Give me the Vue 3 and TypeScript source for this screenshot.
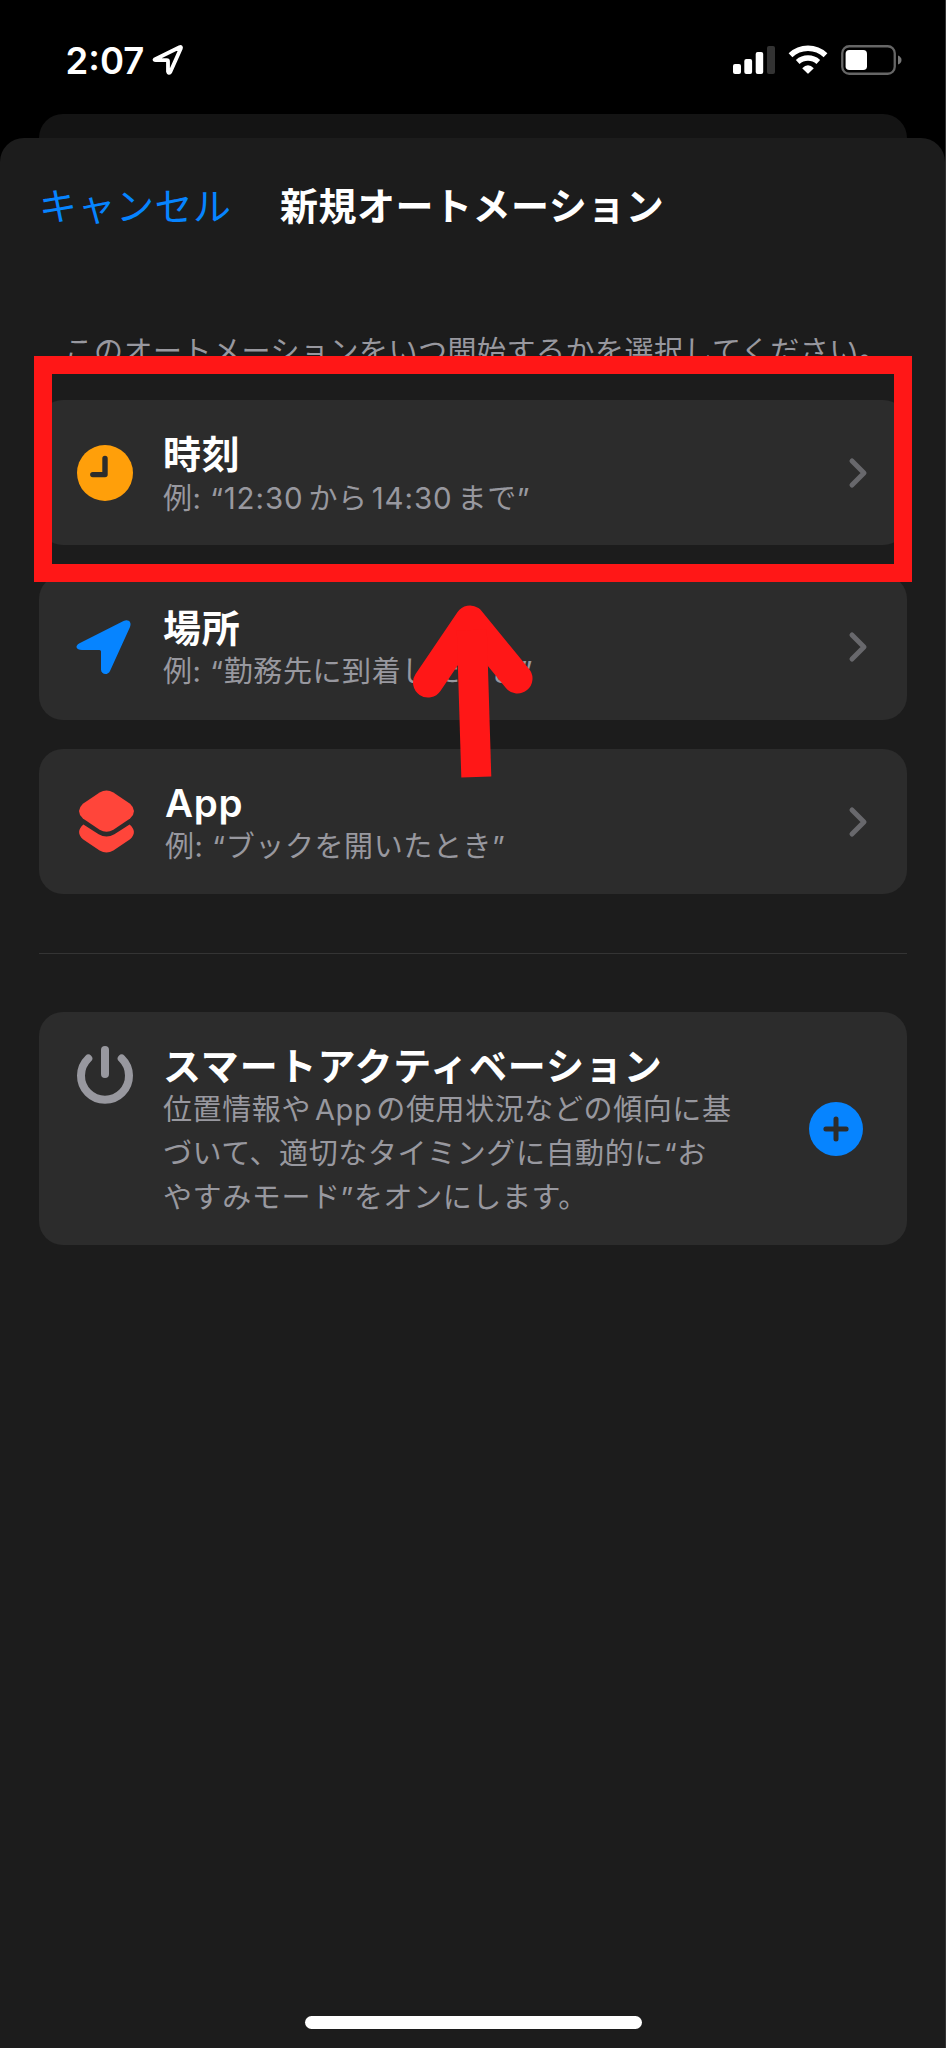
<script setup lang="ts">
interface Run {
  text: string
  kind?: 'latin' | 'digits'
}

interface Trigger {
  id: 'time' | 'place' | 'app'
  title: string
  example: Run[]
}

const triggers: Trigger[] = [
  {
    id: 'time',
    title: '時刻',
    example: [
      { text: '例: “' },
      { text: '12:30', kind: 'digits' },
      { text: 'から' },
      { text: '14:30', kind: 'digits' },
      { text: 'まで”' },
    ],
  },
  { id: 'place', title: '場所', example: [{ text: '例: “勤務先に到着したとき”' }] },
  { id: 'app', title: 'App', example: [{ text: '例: “ブックを開いたとき”' }] },
]

const smartLines: Run[][] = [
  [{ text: '位置情報や' }, { text: 'App', kind: 'latin' }, { text: 'の使用状況などの傾向に基' }],
  [{ text: 'づいて、適切なタイミングに自動的に“お' }],
  [{ text: 'やすみモード”をオンにします。' }],
]
</script>

<template>
  <div class="screen">
    <header class="status">
      <div class="clock">
        <span class="now">2:07</span>
        <svg class="loc" viewBox="0 0 32 32">
          <path d="M3.2 15.2 27.5 3.2Q29.6 2.4 28.8 4.5L18.3 28Q16.6 30 16 27.600V17.500Q16 16.200 14.800 16.200H4Q1.500 16 3.200 15.200Z" />
        </svg>
      </div>
      <div class="indicators">
        <svg class="signal" viewBox="0 0 42 28">
          <rect x="0" y="18" width="8" height="10" rx="2" />
          <rect x="11.300" y="13" width="7.800" height="15" rx="2" />
          <rect x="22.700" y="6" width="7.500" height="22" rx="2" />
          <rect class="dim" x="34" y="0" width="8" height="28" rx="2" />
        </svg>
        <svg class="wifi" viewBox="0 0 40 30">
          <path d="M2.500 11.300A25.500 25.500 0 0 1 37.500 11.300" />
          <path d="M9.700 18A15.500 15.500 0 0 1 30.300 18" />
          <path class="dot" d="M14.200 24.200Q20 18.500 25.800 24.200L20.700 29.300Q20 30 19.300 29.300Z" />
        </svg>
        <svg class="battery" viewBox="0 0 61 30">
          <rect class="case" x="1.250" y="1.250" width="52.500" height="27.500" rx="7" />
          <rect x="4.600" y="5" width="21.400" height="20" rx="3.800" />
          <path class="nub" d="M57 10.500Q60.500 12 60.500 15T57 19.500Z" />
        </svg>
      </div>
    </header>

    <div class="back-sheet"></div>

    <main class="sheet">
      <nav class="bar">
        <span class="cancel">キャンセル</span>
        <h1 class="heading">新規オートメーション</h1>
      </nav>

      <p class="prompt">このオートメーションをいつ開始するかを選択してください。</p>

      <section class="list">
        <article v-for="t in triggers" :key="t.id" class="card" :class="`card-${t.id}`">
          <svg v-if="t.id === 'time'" class="icon" viewBox="0 0 60 60">
            <circle cx="30" cy="30" r="28" fill="#ff9f0a" />
            <path d="M30 15.500V31.600H17.800" fill="none" stroke="#2c2c2c" stroke-width="5.400" stroke-linecap="round" stroke-linejoin="round" />
          </svg>
          <svg v-else-if="t.id === 'place'" class="icon" viewBox="0 0 60 60">
            <path d="M4.500 26.200 48.500 3.900C53.500 1.800 57 5 55 10L35 54C32.500 59 26 57.500 26 52.500V34.500Q26 33 24.500 33H7C1 33-.5 28.800 4.500 26.200Z" fill="#0684ff" />
          </svg>
          <svg v-else class="icon" viewBox="0 0 58 64">
            <path d="M22 2.500Q29-1.500 36 2.500L53 14Q61 21.500 53 29L36 40.500Q29 44.500 22 40.500L5 29Q-3 21.500 5 14Z" fill="#ff453a" />
            <path d="M5.500 35 21 45Q29 49.500 37 45L52.500 35Q61 42.500 53 50L36 61.500Q29 65.500 22 61.500L5 50Q-3 42.500 5.500 35Z" fill="#ff453a" />
          </svg>
          <div class="text">
            <h2 class="title">{{ t.title }}</h2>
            <p class="sub"><span v-for="(run, i) in t.example" :key="i" :class="run.kind">{{ run.text }}</span></p>
          </div>
          <svg class="chevron" viewBox="0 0 18 30">
            <path d="M3 3 15 15 3 27" />
          </svg>
        </article>
      </section>

      <hr class="rule" />

      <article class="card smart">
        <svg class="icon" viewBox="0 0 60 60">
          <path d="M30 6V30" />
          <path d="M13.300 14.500A24 24 0 1 0 46.700 14.500" />
        </svg>
        <div class="text">
          <h2 class="title">スマートアクティベーション</h2>
          <p v-for="(line, n) in smartLines" :key="n" class="sub"><span v-for="(run, i) in line" :key="i" :class="run.kind">{{ run.text }}</span></p>
        </div>
        <svg class="add" viewBox="0 0 54 54">
          <circle cx="27" cy="27" r="27" />
          <path d="M27 16.900V37.100M16.900 27H37.100" />
        </svg>
      </article>
    </main>

    <div class="highlight"></div>
    <svg class="pointer" viewBox="0 0 100 180">
      <path class="head" d="M16 82.500 58 20.500 105.500 78.500" />
      <path d="M59.800 30 64.300 177" />
    </svg>
    <div class="home"></div>
  </div>
</template>

<style>
html,
body {
  margin: 0;
  background: #1c1c1c;
}
</style>

<style scoped>
.screen {
  position: relative;
  width: 946px;
  height: 2048px;
  box-sizing: border-box;
  border-right: 1px solid #333;
  overflow: hidden;
  background: #000;
  color: #fff;
  font-family: Inter, 'Noto Sans CJK JP', sans-serif;
}
h1, h2, p { margin: 0; white-space: nowrap; }
svg { display: block; flex: none; overflow: visible; }

.status {
  display: flex;
  justify-content: space-between;
  height: 114px;
  box-sizing: border-box;
  padding: 44px 43.500px 0 65.500px;
}
.clock { display: flex; }
.now { font-size: 36.500px; font-weight: 560; line-height: 34px; width: 86px; letter-spacing: 0; }
.loc { width: 32px; height: 32px; fill: none; stroke: #fff; stroke-width: 3.800; stroke-linejoin: round; }
.indicators { display: flex; }
.signal { width: 42px; height: 28px; margin: 2px 13px 0 0; fill: #fff; }
.signal .dim { fill: #333; }
.wifi { width: 40px; height: 30px; margin-right: 13px; fill: none; stroke: #fff; stroke-width: 5.500; }
.wifi .dot { fill: #fff; stroke: none; }
.battery { width: 61px; height: 30px; margin-top: 1px; fill: #fff; }
.battery .case { fill: none; stroke: #666; stroke-width: 2.300; }
.battery .nub { fill: #777; }

.back-sheet { height: 24px; margin: 0 38px 0 39px; background: #141414; border-radius: 24px 24px 0 0; }

.sheet {
  height: 1910px;
  box-sizing: border-box;
  padding: 0 38px 0 39px;
  background: #1c1c1c;
  border-radius: 24px 24px 0 0;
}
.bar { display: flex; align-items: center; height: 138px; padding-bottom: 8px; box-sizing: border-box; }
.cancel { width: 241px; color: #0684ff; font-size: 38px; font-weight: 400; letter-spacing: 0.500px; }
.heading { font-size: 38px; font-weight: 600; letter-spacing: 0.500px; }
.prompt {
  height: 124px;
  padding: 56px 0 0 25.500px;
  box-sizing: border-box;
  color: #98989f;
  font-size: 29px;
  font-weight: 400;
  line-height: 40px;
  letter-spacing: 0.500px;
}
.list { display: flex; flex-direction: column; gap: 29.500px; }
.card {
  display: flex;
  align-items: center;
  height: 145px;
  box-sizing: border-box;
  padding: 0 40px 0 36px;
  background: #2c2c2c;
  border-radius: 24px;
}
.icon { width: 60px; height: 60px; margin-right: 28px; }
.card-app .icon { width: 57px; height: 63px; margin: 0 30px 0 3px; }
.text { flex: 1; padding-top: 6px; }
.title { height: 44px; line-height: 44px; font-size: 38px; font-weight: 600; letter-spacing: 0.700px; }
.card-app .title { font-size: 38.500px; }
.smart .title { letter-spacing: 0.900px; }
.sub { height: 44px; line-height: 44px; color: #98989f; font-size: 29px; font-weight: 400; letter-spacing: 0.600px; }
.sub .latin { margin: 0 4px; }
.sub .digits { margin: 0 5px 0 4px; font-size: 29.500px; letter-spacing: 0.900px; }
.sub .digits:nth-child(2) { margin-left: 0; }
.chevron { width: 18px; height: 30px; fill: none; stroke: #68686c; stroke-width: 5; stroke-linecap: round; stroke-linejoin: round; }
.rule { height: 1px; margin: 59px 0 58px; border: 0; background: #343434; }
.smart { height: 233px; padding-right: 44px; }
.smart .icon { align-self: flex-start; margin-top: 32px; fill: none; stroke: #98989f; stroke-width: 8; stroke-linecap: round; }
.add { width: 54px; height: 54px; fill: #0684ff; }
.add path { stroke: #2c2c2c; stroke-width: 5; stroke-linecap: round; }

.highlight {
  position: absolute;
  left: 34px;
  top: 356px;
  width: 878px;
  height: 226px;
  box-sizing: border-box;
  border: 18px solid #ff1717;
}
.pointer { position: absolute; left: 412px; top: 600px; width: 100px; height: 180px; fill: none; stroke: #ff1717; stroke-width: 30; stroke-linejoin: round; }
.pointer .head { stroke-linecap: round; }
.home { position: absolute; left: 305px; top: 2016px; width: 337px; height: 13px; border-radius: 7px; background: #fff; }
</style>
